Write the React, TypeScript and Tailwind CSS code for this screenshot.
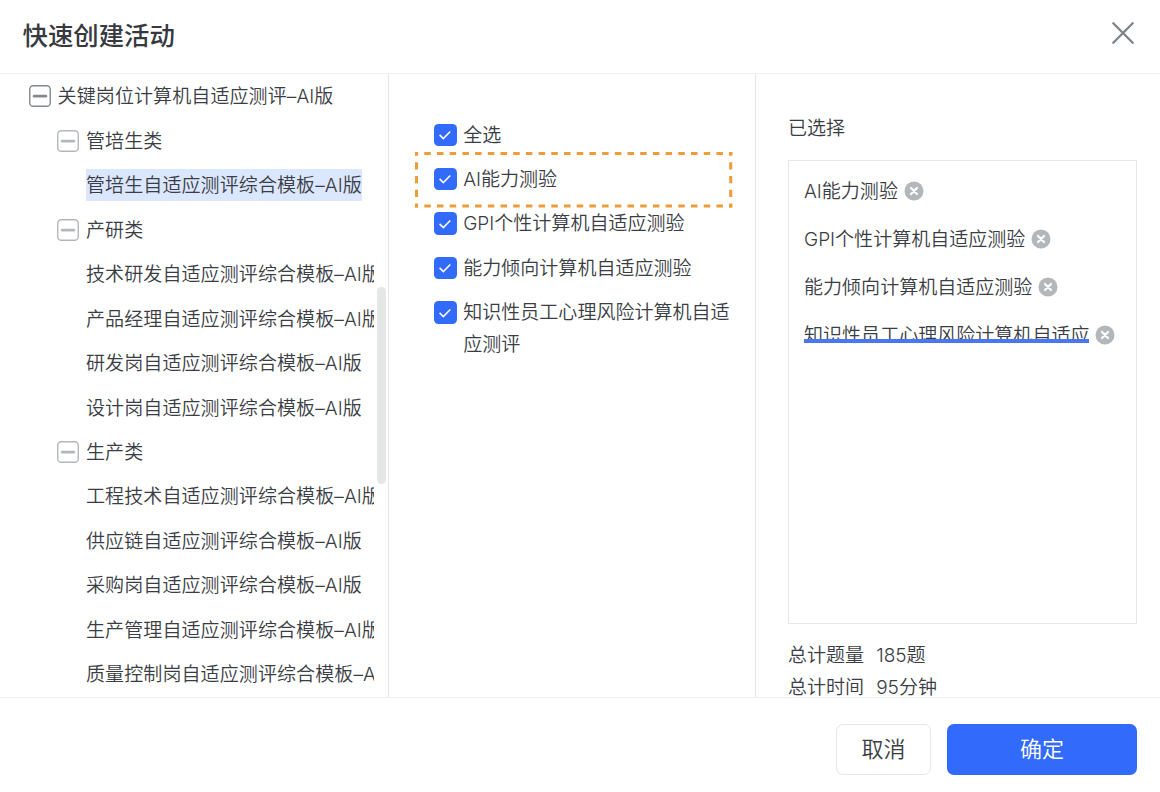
import type { ReactNode } from 'react';

type TreeNode = { label: string; level: 0 | 1 | 2; active?: boolean };

const tree: TreeNode[] = [
  { label: '关键岗位计算机自适应测评–AI版', level: 0 },
  { label: '管培生类', level: 1 },
  { label: '管培生自适应测评综合模板–AI版', level: 2, active: true },
  { label: '产研类', level: 1 },
  { label: '技术研发自适应测评综合模板–AI版', level: 2 },
  { label: '产品经理自适应测评综合模板–AI版', level: 2 },
  { label: '研发岗自适应测评综合模板–AI版', level: 2 },
  { label: '设计岗自适应测评综合模板–AI版', level: 2 },
  { label: '生产类', level: 1 },
  { label: '工程技术自适应测评综合模板–AI版', level: 2 },
  { label: '供应链自适应测评综合模板–AI版', level: 2 },
  { label: '采购岗自适应测评综合模板–AI版', level: 2 },
  { label: '生产管理自适应测评综合模板–AI版', level: 2 },
  { label: '质量控制岗自适应测评综合模板–AI版', level: 2 },
];

const indents = ['pl-[29px]', 'pl-[57.4px]', 'pl-[86px]'];

function CollapseIcon({ dark }: { dark: boolean }) {
  return (
    <svg
      viewBox="0 0 22 22"
      className={`mr-[6.6px] size-[22px] shrink-0 ${dark ? 'text-[#83888f]' : 'text-[#b3b7bd]'}`}
    >
      <rect x="0.75" y="0.75" width="20.5" height="20.5" rx="3.6" fill="none" stroke="currentColor" strokeWidth="1.4" />
      <path d="M5.2 11.2h11.6" stroke="currentColor" strokeWidth="2.8" strokeLinecap="round" />
    </svg>
  );
}

function TreeRow({ node }: { node: TreeNode }) {
  return (
    <li className={`flex h-[44.46px] shrink-0 items-center whitespace-nowrap ${indents[node.level]}`}>
      {node.level < 2 && <CollapseIcon dark={node.level === 0} />}
      <span className={`h-8 leading-[34px] tracking-[0.07px] ${node.active ? 'bg-[#dbe7ff]' : ''}`}>{node.label}</span>
    </li>
  );
}

function CheckRow({ children }: { children: ReactNode }) {
  return (
    <label className="mb-[12.46px] flex items-start">
      <span className="mt-[4px] mr-[6.5px] flex size-[22.5px] shrink-0 items-center justify-center rounded-[4.5px] bg-[#326bfb]">
        <svg viewBox="0 0 22 22" className="size-[22px]">
          <path d="M5.6 10.9l3.7 3.7 7-7.1" fill="none" stroke="white" strokeWidth="1.5" />
        </svg>
      </span>
      <span className="w-[270px] leading-8">{children}</span>
    </label>
  );
}

function HighlightFrame() {
  return (
    <svg
      viewBox="0 0 318 56"
      className="pointer-events-none absolute top-[-12px] left-[-19px] h-[56px] w-[318px]"
      stroke="#ee9c37"
      strokeWidth="3"
    >
      <path d="M0 1.5H317.4M0 54H317.4" strokeDasharray="6.5 6.2" strokeDashoffset="3.4" />
      <path d="M1.5 0V55.5M315.7 0V55.5" strokeDasharray="7.2 6.55" strokeDashoffset="3.4" />
    </svg>
  );
}

function SelectedRow({ label, underlined = false }: { label: string; underlined?: boolean }) {
  return (
    <li className="flex h-[47.7px] items-center whitespace-nowrap">
      <span className="h-8 leading-[34px]">
        {underlined ? (
          <span className="block h-6 overflow-hidden border-b-4 border-[#4b76f1]">{label}</span>
        ) : (
          label
        )}
      </span>
      <svg viewBox="0 0 20 20" className="ml-[6px] size-5">
        <circle cx="10" cy="10" r="9.5" fill="#b3b6bb" />
        <path d="M7 7l6 6M13 7l-6 6" stroke="white" strokeWidth="2.3" strokeLinecap="round" />
      </svg>
    </li>
  );
}

export default function App() {
  return (
    <div className="flex h-[792px] w-[1160px] flex-col overflow-hidden bg-white font-['Inter','Noto_Sans_CJK_SC',sans-serif] text-[19.05px] font-[350] text-[#3a3d44]">
      <header className="flex h-[74px] shrink-0 items-center justify-between border-b-[1.5px] border-[#eff0f2] pr-[26px] pl-[22.5px]">
        <h1 className="mb-[2px] text-[25.4px] leading-[38px] font-medium text-[#363940]">快速创建活动</h1>
        <svg viewBox="0 0 22 22" className="mb-[7px] size-[22px]">
          <path d="M1.3 1.3l19.4 19.4M20.7 1.3L1.3 20.7" stroke="#7d8388" strokeWidth="2.3" strokeLinecap="round" />
        </svg>
      </header>

      <main className="flex h-[623px] shrink-0 overflow-hidden">
        <section className="flex w-[389px] shrink-0 justify-between border-r border-[#e3e5e9] pr-0.5">
          <ul className="flex w-[374px] flex-col overflow-hidden pt-[0.2px]">
            {tree.map((node) => (
              <TreeRow key={node.label} node={node} />
            ))}
          </ul>
          <div className="mt-[213px] h-[197px] w-[9px] rounded-full bg-[#e4e7e6]" />
        </section>

        <section className="w-[367px] shrink-0 border-r border-[#e3e5e9] pt-[45.5px] pl-[45.2px]">
          <CheckRow>全选</CheckRow>
          <div className="relative">
            <CheckRow>AI能力测验</CheckRow>
            <HighlightFrame />
          </div>
          <CheckRow>GPI个性计算机自适应测验</CheckRow>
          <CheckRow>能力倾向计算机自适应测验</CheckRow>
          <CheckRow>知识性员工心理风险计算机自适应测评</CheckRow>
        </section>

        <section className="flex-1 pt-[38px] pr-[23px] pl-8">
          <h2 className="h-8 leading-[34px]">已选择</h2>
          <ul className="mt-4 h-[464px] border-[1.5px] border-[#e4e6ea] px-[15px] pt-[6.6px]">
            <SelectedRow label="AI能力测验" />
            <SelectedRow label="GPI个性计算机自适应测验" />
            <SelectedRow label="能力倾向计算机自适应测验" />
            <SelectedRow label="知识性员工心理风险计算机自适应" underlined />
          </ul>
          <dl className="mt-4 grid grid-cols-[auto_1fr] gap-x-3 leading-[31.7px] whitespace-nowrap">
            <dt>总计题量</dt>
            <dd>185题</dd>
            <dt>总计时间</dt>
            <dd>95分钟</dd>
          </dl>
        </section>
      </main>

      <footer className="flex flex-1 items-start justify-end gap-4 border-t-[1.5px] border-[#eceff1] pt-[26px] pr-[23px]">
        <button className="h-[51px] w-[95px] rounded-[7px] border-[1.5px] border-[#e4e6ea] text-[22px]">取消</button>
        <button className="h-[51px] w-[190px] rounded-[7px] bg-[#326bfb] text-[22px] text-white">确定</button>
      </footer>
    </div>
  );
}
